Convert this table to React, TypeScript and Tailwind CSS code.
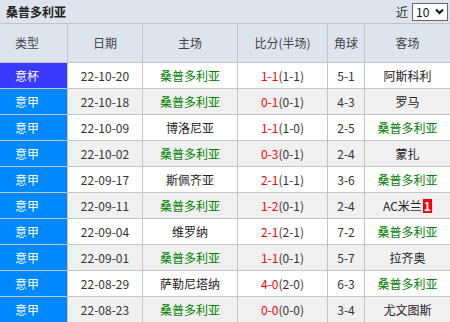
import React from "react";

type Match = {
  league: string;
  date: string;
  home: string;
  score: string;
  half: string;
  corner: string;
  away: string;
  badge?: string;
};

const TEAM = "桑普多利亚";

const matches: Match[] = [
  { league: "意杯", date: "22-10-20", home: TEAM, score: "1-1", half: "(1-1)", corner: "5-1", away: "阿斯科利" },
  { league: "意甲", date: "22-10-18", home: TEAM, score: "0-1", half: "(0-1)", corner: "4-3", away: "罗马" },
  { league: "意甲", date: "22-10-09", home: "博洛尼亚", score: "1-1", half: "(1-0)", corner: "2-5", away: TEAM },
  { league: "意甲", date: "22-10-02", home: TEAM, score: "0-3", half: "(0-1)", corner: "2-4", away: "蒙扎" },
  { league: "意甲", date: "22-09-17", home: "斯佩齐亚", score: "2-1", half: "(1-1)", corner: "3-6", away: TEAM },
  { league: "意甲", date: "22-09-11", home: TEAM, score: "1-2", half: "(0-1)", corner: "2-4", away: "AC米兰", badge: "1" },
  { league: "意甲", date: "22-09-04", home: "维罗纳", score: "2-1", half: "(2-1)", corner: "7-2", away: TEAM },
  { league: "意甲", date: "22-09-01", home: TEAM, score: "1-1", half: "(0-1)", corner: "5-7", away: "拉齐奥" },
  { league: "意甲", date: "22-08-29", home: "萨勒尼塔纳", score: "4-0", half: "(2-0)", corner: "6-3", away: TEAM },
  { league: "意甲", date: "22-08-23", home: TEAM, score: "0-0", half: "(0-0)", corner: "3-4", away: "尤文图斯" },
];

const headers = ["类型", "日期", "主场", "比分(半场)", "角球", "客场"];

function Team({ name }: { name: string }) {
  return <span className={name === TEAM ? "text-[#008000]" : "text-[#222]"}>{name}</span>;
}

export default function App() {
  return (
    <div
      className="w-[450px] h-[322px] overflow-hidden bg-white text-[12px] leading-none text-[#333]"
      style={{ fontFamily: '"Noto Sans CJK SC", "Noto Sans", sans-serif' }}
    >
      {/* Title bar */}
      <div className="h-[24px] flex items-center justify-between pl-[6px] pr-[2px] bg-[#dde4ed] border-b border-[#c4c4c4]">
        <span className="font-bold text-[#222]">{TEAM}</span>
        <div className="flex items-center gap-[4px]">
          <span className="text-[#333]">近</span>
          <div className="w-[36px] h-[18px] bg-white border border-[#666] flex items-center justify-between pl-[3px] pr-[3px] text-[#111]">
            <span>10</span>
            <svg width="9" height="7" viewBox="0 0 9 7">
              <path d="M1 1.5 L4.5 5 L8 1.5" fill="none" stroke="#111" strokeWidth="2" />
            </svg>
          </div>
        </div>
      </div>

      {/* Table */}
      <div className="grid grid-cols-[67px_74px_94px_89px_36px_85px] gap-px bg-[#c4c4c4] pb-px">
        {headers.map((h, i) => (
          <div
            key={h}
            className={`h-[38px] bg-[#dde4ed] flex items-center justify-center text-[#444] ${i === 0 ? "pr-[13px]" : ""}`}
          >
            {h}
          </div>
        ))}
        {matches.map((m, i) => {
          const rowBg = i % 2 === 0 ? "bg-white" : "bg-[#f0f0f0]";
          return (
            <React.Fragment key={m.date}>
              <div
                className={`h-[25px] pr-[13px] flex items-center justify-center text-white ${
                  m.league === "意杯" ? "bg-[#3a3aff]" : "bg-[#0088ff]"
                }`}
              >
                {m.league}
              </div>
              <div className={`h-[25px] flex items-center justify-center ${rowBg}`}>{m.date}</div>
              <div className={`h-[25px] flex items-center justify-center ${rowBg}`}>
                <Team name={m.home} />
              </div>
              <div className={`h-[25px] flex items-center justify-center ${rowBg}`}>
                <span className="text-[#ff0000]">{m.score}</span>
                <span>{m.half}</span>
              </div>
              <div className={`h-[25px] flex items-center justify-center ${rowBg}`}>{m.corner}</div>
              <div className={`h-[25px] flex items-center justify-center ${rowBg}`}>
                <Team name={m.away} />
                {m.badge && (
                  <span className="ml-px bg-[#ff0000] text-white font-bold px-[1px] h-[14px] flex items-center">
                    {m.badge}
                  </span>
                )}
              </div>
            </React.Fragment>
          );
        })}
      </div>
    </div>
  );
}
